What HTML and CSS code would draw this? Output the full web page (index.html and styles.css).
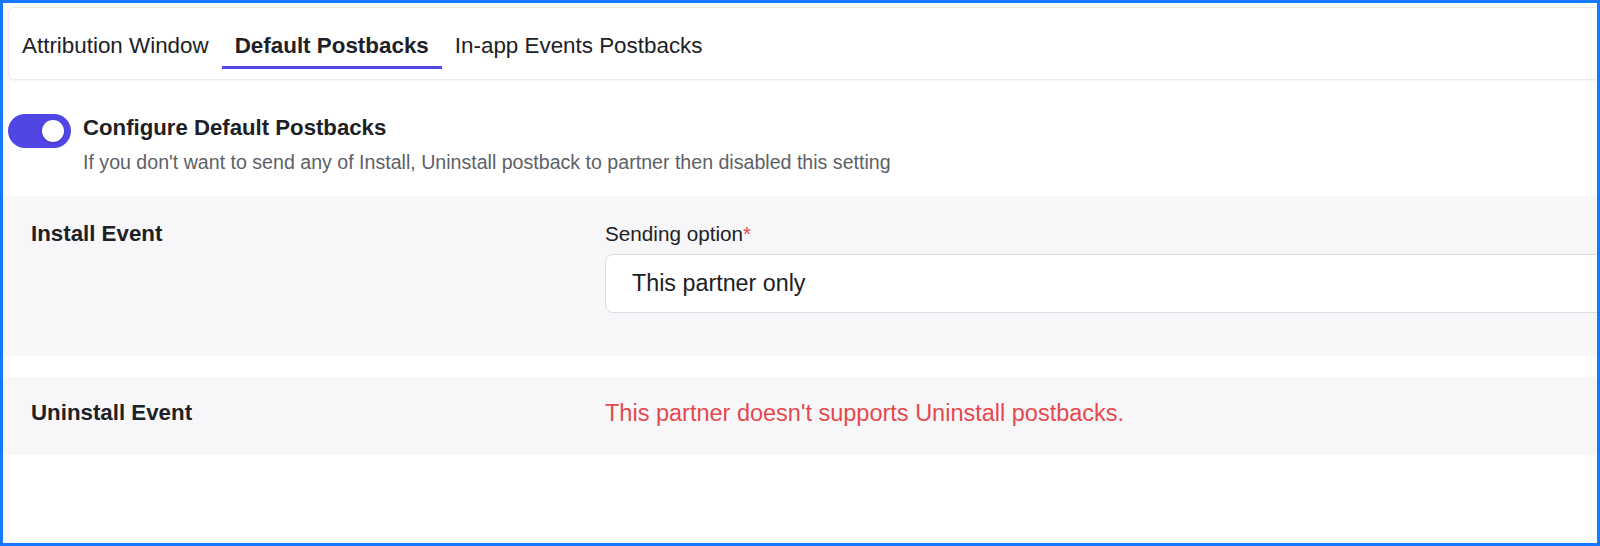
FILE: index.html
```html
<!DOCTYPE html>
<html lang="en">
<head>
  <meta charset="UTF-8" />
  <title>Postback Settings</title>
  <meta name="viewport" content="width=device-width, initial-scale=1.0"/>
  <link rel="stylesheet" href="styles.css">
</head>
<body>
<div class="frame">
  <nav class="tabs">
    <a class="tab">Attribution Window</a>
    <a class="tab active">Default Postbacks</a>
    <a class="tab">In-app Events Postbacks</a>
  </nav>

  <div class="config">
    <span class="toggle"><span class="knob"></span></span>
    <div>
      <div class="config-title">Configure Default Postbacks</div>
      <div class="config-help">If you don't want to send any of Install, Uninstall postback to partner then disabled this setting</div>
    </div>
  </div>

  <section class="event install">
    <div class="event-label">Install Event</div>
    <div class="field">
      <label>Sending option<span class="req">*</span></label>
      <div class="select">This partner only</div>
    </div>
  </section>

  <section class="event uninstall">
    <div class="event-label">Uninstall Event</div>
    <div class="notice">This partner doesn't supports Uninstall postbacks.</div>
  </section>
</div>
</body>
</html>
```

FILE: styles.css
```css
body {
  margin: 0;
  font-family: 'Liberation Sans', Arial, sans-serif;
  color: #1d2125;
  background: white;
}

.frame {
  height: 546px;
  box-sizing: border-box;
  border: 3px solid #1677ff;
  overflow: hidden;
  background: white;
}

.tabs {
  display: flex;
  height: 73px;
  box-sizing: border-box;
  margin: 4px -20px 0 5px;
  border: 1px solid #ebebf1;
  border-radius: 6px;
  box-shadow: 0 1px 2px rgba(0,0,0,0.05);
}

.tab {
  padding: 26px 13px 8px;
  font-size: 22.4px;
  line-height: 24px;
  height: 24px;
  border-bottom: 3px solid transparent;
  color: #1d2125;
}

.tab.active {
  font-weight: bold;
  border-bottom-color: #4f46e5;
}

.config {
  display: flex;
  align-items: flex-start;
  gap: 12px;
  padding: 34px 0 0 5px;
}

.toggle {
  flex: none;
  display: flex;
  align-items: center;
  justify-content: flex-end;
  width: 63px;
  height: 34px;
  box-sizing: border-box;
  padding-right: 7px;
  border-radius: 17px;
  background: #5046e4;
}

.knob {
  width: 22px;
  height: 22px;
  border-radius: 50%;
  background: white;
  box-shadow: 0 1px 2px rgba(0,0,0,0.25);
}

.config-title {
  font-size: 22.2px;
  font-weight: bold;
  line-height: 28px;
}

.config-help {
  margin-top: 9px;
  font-size: 19.6px;
  line-height: 22px;
  color: #5c6167;
}

.event {
  display: grid;
  grid-template-columns: 574px 1fr;
  padding-left: 28px;
  background: #f7f7f9;
}

.install {
  margin-top: 23px;
  padding-top: 25px;
  padding-bottom: 43px;
}

.uninstall {
  margin-top: 21px;
  padding-top: 23px;
  padding-bottom: 29px;
}

.event-label {
  font-size: 22.3px;
  font-weight: bold;
  line-height: 26px;
}

.field label {
  display: block;
  font-size: 20.7px;
  line-height: 26px;
}

.req {
  color: #e5484d;
}

.select {
  margin: 7px -40px 0 0;
  padding-left: 26px;
  height: 57px;
  line-height: 57px;
  font-size: 23.3px;
  background: white;
  border: 1px solid #dcdce1;
  border-radius: 8px;
}

.notice {
  font-size: 23.5px;
  line-height: 26px;
  color: #e5484d;
}
```
